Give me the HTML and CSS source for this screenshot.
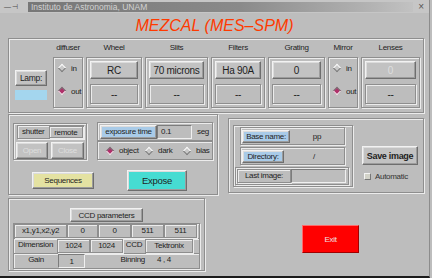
FILE: index.html
```html
<!DOCTYPE html>
<html lang="en">
<head>
  <meta charset="UTF-8" />
  <title>MEZCAL (MES-SPM)</title>
  <link rel="stylesheet" href="styles.css">
</head>
<body>
  <div class="window">
    <div class="titlebar">
      <span class="tb-icons">— ⊣</span>
      <div class="tb-bar">Instituto de Astronomia, UNAM</div>
      <span class="tb-close">×</span>
    </div>
    <h1 class="heading">MEZCAL (MES–SPM)</h1>

    <!-- optical elements -->
    <div class="panel top groove">
      <div class="col lamp-col">
        <span class="lbl"></span>
        <div class="lamp">
          <div class="btn lamp-btn">Lamp:</div>
          <div class="lamp-state"></div>
        </div>
      </div>
      <div class="col w30">
        <span class="lbl">diffuser</span>
        <div class="groove radios">
          <div class="radio"><span class="dia"></span>in</div>
          <div class="radio"><span class="dia on"></span>out</div>
        </div>
      </div>
      <div class="col w56">
        <span class="lbl">Wheel</span>
        <div class="groove sel">
          <div class="btn">RC</div>
          <div class="groove cur">--</div>
        </div>
      </div>
      <div class="col w63">
        <span class="lbl">Slits</span>
        <div class="groove sel">
          <div class="btn">70 microns</div>
          <div class="groove cur">--</div>
        </div>
      </div>
      <div class="col w54">
        <span class="lbl">Filters</span>
        <div class="groove sel">
          <div class="btn">Ha 90A</div>
          <div class="groove cur">--</div>
        </div>
      </div>
      <div class="col w57">
        <span class="lbl">Grating</span>
        <div class="groove sel">
          <div class="btn">0</div>
          <div class="groove cur">--</div>
        </div>
      </div>
      <div class="col w30">
        <span class="lbl">Mirror</span>
        <div class="groove radios">
          <div class="radio"><span class="dia"></span>in</div>
          <div class="radio"><span class="dia on"></span>out</div>
        </div>
      </div>
      <div class="col w59">
        <span class="lbl">Lenses</span>
        <div class="groove sel">
          <div class="btn disabled">0</div>
          <div class="groove cur">--</div>
        </div>
      </div>
    </div>

    <div class="row2">
      <!-- exposure -->
      <div class="panel expo groove">
        <div class="groove shutter">
          <div class="srow groove">
            <span class="s-lbl">shutter</span>
            <span class="s-val groove">remote</span>
          </div>
          <div class="sbtns">
            <div class="btn disabled open">Open</div>
            <div class="btn disabled close">Close</div>
          </div>
        </div>
        <div class="exptime">
          <div class="groove etrow">
            <div class="btn blue et-lbl">exposure time</div>
            <div class="entry et-val">0.1</div>
            <span class="seg">seg</span>
          </div>
          <div class="groove typerow">
            <div class="radio"><span class="dia on"></span>object</div>
            <div class="radio"><span class="dia"></span>dark</div>
            <div class="radio"><span class="dia"></span>bias</div>
          </div>
        </div>
        <div class="btn seq">Sequences</div>
        <div class="btn expose">Expose</div>
      </div>

      <!-- saving -->
      <div class="panel save groove">
        <div class="groove files">
          <div class="frow groove">
            <div class="btn blue f-lbl">Base name:</div>
            <span class="f-val">pp</span>
          </div>
          <div class="frow groove">
            <div class="btn blue f-lbl dir">Directory:</div>
            <span class="f-val">/</span>
          </div>
          <div class="frow groove last">
            <span class="groove l-lbl">Last image:</span>
            <span class="entry l-val"></span>
          </div>
        </div>
        <div class="save-col">
          <div class="btn save-btn">Save image</div>
          <label class="auto"><span class="check"></span>Automatic</label>
        </div>
      </div>
    </div>

    <div class="row3">
      <!-- CCD -->
      <div class="panel ccd groove">
        <div class="btn ccd-btn">CCD parameters</div>
        <div class="ctable">
          <div class="crow groove">
            <span class="cell groove c53">x1,y1,x2,y2</span>
            <span class="cell groove c31">0</span>
            <span class="cell groove c33">0</span>
            <span class="cell groove c33">511</span>
            <span class="cell groove c33">511</span>
          </div>
          <div class="crow groove">
            <span class="cell c43">Dimension</span>
            <span class="cell groove c33">1024</span>
            <span class="cell groove c33">1024</span>
            <span class="cell c22">CCD</span>
            <span class="cell groove c48">Tektronix</span>
          </div>
          <div class="crow groove">
            <span class="cell c44">Gain</span>
            <span class="cell entry c27">1</span>
            <span class="cell c64 right">Binning</span>
            <span class="cell c30">4 , 4</span>
          </div>
        </div>
      </div>
      <div class="btn exit">Exit</div>
    </div>
  </div>
</body>
</html>
```

FILE: styles.css
```css
* {
  box-sizing: border-box;
  margin: 0;
  padding: 0;
  font-family: 'Liberation Sans', Arial, sans-serif;
}

body {
  width: 432px;
  height: 278px;
  overflow: hidden;
  background: #bdbdbd;
  color: #1e1e1e;
  font-size: 8px;
  letter-spacing: -0.3px;
}

.window {
  width: 430px;
  height: 278px;
  border-right: 1px solid #8c8c8c;
  border-bottom: 2px solid #1c1c1c;
}

/* title bar */
.titlebar {
  display: flex;
  align-items: center;
  height: 13px;
  background: #c6c6c6;
}

.tb-icons {
  width: 28px;
  padding-left: 4px;
  font-size: 7px;
  color: #4a4a4a;
}

.tb-bar {
  flex: 1;
  height: 10px;
  padding-left: 3px;
  line-height: 10px;
  font-size: 8.5px;
  letter-spacing: 0;
  color: #d2d2d2;
  background: linear-gradient(90deg, #777 0%, #8a8a8a 55%, #b4b4b4 90%, #c2c2c2 100%);
}

.tb-close {
  width: 16px;
  text-align: center;
  font-size: 10px;
  color: #555;
}

.heading {
  height: 25px;
  line-height: 25px;
  text-align: center;
  font-size: 16px;
  font-weight: normal;
  font-style: italic;
  letter-spacing: 0;
  color: #ff3a00;
}

/* shared bits */
.groove {
  border: 1px solid #8e8e8e;
  box-shadow: inset 1px 1px 0 #ececec, 1px 1px 0 #ececec;
}

.btn {
  display: flex;
  align-items: center;
  justify-content: center;
  background: #c2c2c2;
  border: 1px solid;
  border-color: #f2f2f2 #6e6e6e #6e6e6e #f2f2f2;
  box-shadow: inset -1px -1px 0 #9c9c9c, inset 1px 1px 0 #dcdcdc;
  white-space: nowrap;
}

.btn.disabled { color: #dedede; }
.btn.blue { background: #a9cbe8; }

.entry {
  display: flex;
  align-items: center;
  background: #bdbdbd;
  border: 1px solid;
  border-color: #7c7c7c #f0f0f0 #f0f0f0 #7c7c7c;
}

.radio {
  display: flex;
  align-items: center;
  height: 10px;
}

.dia {
  width: 6px;
  height: 6px;
  margin: 0 6px 0 2px;
  transform: rotate(45deg);
  background: #c8c8c8;
  border: 1px solid;
  border-color: #fafafa #7a7a7a #7a7a7a #fafafa;
}

.dia.on {
  background: #b0306a;
  border-color: #7a7a7a #f0f0f0 #f0f0f0 #7a7a7a;
}

/* top panel */
.panel.top {
  display: flex;
  gap: 3px;
  width: 416px;
  height: 75px;
  margin: 0 0 0 8px;
  padding: 3px 0 0 6px;
}

.col {
  display: flex;
  flex-direction: column;
  gap: 3px;
}

.lbl {
  height: 12px;
  line-height: 12px;
  text-align: center;
}

.lamp-col { width: 35px; }
.w30 { width: 30px; }
.w54 { width: 54px; }
.w56 { width: 56px; }
.w57 { width: 57px; }
.w59 { width: 59px; }
.w63 { width: 63px; }

.lamp { padding-top: 13px; }

.lamp-btn {
  width: 32px;
  height: 16px;
  font-size: 8.5px;
}

.lamp-state {
  width: 32px;
  height: 10px;
  margin-top: 4px;
  background: #a4d6ee;
}

.radios {
  display: flex;
  flex-direction: column;
  gap: 13px;
  height: 51px;
  padding: 5px 0 0 3px;
}

.sel {
  display: flex;
  flex-direction: column;
  gap: 5px;
  height: 51px;
  padding: 3px;
}

.sel .btn {
  height: 18px;
  font-size: 10px;
}

.cur {
  display: flex;
  align-items: center;
  justify-content: center;
  height: 20px;
  font-size: 10px;
}

/* exposure row */
.row2 {
  display: flex;
  align-items: flex-start;
  margin: 1px 0 0 8px;
}

.panel.expo {
  display: grid;
  grid-template-columns: 74px 116px;
  column-gap: 10px;
  align-items: start;
  width: 210px;
  height: 81px;
  padding: 8px 0 0 4px;
}

.shutter {
  height: 37px;
  padding: 1px 2px;
}

.srow {
  display: flex;
  height: 14px;
  margin-left: 1px;
}

.s-lbl {
  width: 31px;
  line-height: 12px;
  text-align: center;
}

.s-val {
  width: 35px;
  line-height: 11px;
  text-align: center;
}

.sbtns {
  display: flex;
  gap: 3px;
  margin-top: 3px;
}

.sbtns .btn { height: 17px; }
.open { width: 33px; }
.close { width: 34px; }

.exptime { margin-top: -1px; }

.etrow {
  display: flex;
  align-items: center;
  height: 19px;
  padding-left: 2px;
}

.et-lbl {
  width: 57px;
  height: 14px;
}

.et-val {
  width: 35px;
  height: 14px;
  padding-left: 3px;
}

.seg { margin-left: 5px; }

.typerow {
  display: flex;
  align-items: center;
  height: 19px;
  padding-left: 7px;
}

.typerow .radio:nth-child(1) { width: 39px; }
.typerow .radio:nth-child(2) { width: 38px; }

.seq {
  width: 62px;
  height: 17px;
  margin: 9px 0 0 19px;
  background: #e4e2a2;
}

.expose {
  width: 60px;
  height: 21px;
  margin: 7px 0 0 30px;
  font-size: 9.5px;
  background: #46dcd2;
}

/* save panel */
.panel.save {
  display: flex;
  align-items: flex-start;
  width: 196px;
  height: 75px;
  margin: 4px 0 0 10px;
  padding: 6px 0 0 4px;
}

.files {
  width: 120px;
  height: 62px;
  padding: 1px 0 0 6px;
}

.frow {
  display: flex;
  align-items: center;
  width: 105px;
  height: 18px;
  margin-bottom: 2px;
  padding-left: 1px;
}

.f-lbl {
  width: 48px;
  height: 13px;
}

.f-lbl.dir { width: 42px; }

.f-val {
  flex: 1;
  text-align: center;
}

.frow.last {
  width: 114px;
  margin: 1px 0 0 -5px;
}

.l-lbl {
  width: 54px;
  height: 14px;
  line-height: 12px;
  text-align: center;
}

.l-val {
  width: 55px;
  height: 14px;
}

.save-col {
  display: flex;
  flex-direction: column;
  margin: 21px 0 0 9px;
}

.save-btn {
  width: 56px;
  height: 19px;
  font-size: 9px;
  font-weight: bold;
}

.auto {
  display: flex;
  align-items: center;
  margin-top: 7px;
  padding-left: 2px;
  color: #333;
}

.check {
  width: 7px;
  height: 7px;
  margin-right: 4px;
  background: #d2d2c8;
  border: 1px solid;
  border-color: #f4f4f4 #777 #777 #f4f4f4;
}

/* CCD row */
.row3 {
  display: flex;
  align-items: flex-start;
  margin-left: 8px;
}

.panel.ccd {
  width: 197px;
  height: 73px;
  margin-top: 3px;
  padding: 9px 0 0 4px;
}

.ccd-btn {
  width: 73px;
  height: 14px;
  margin-left: 57px;
}

.ctable {
  margin-top: 1px;
}

.crow {
  display: flex;
  align-items: center;
  width: 187px;
  height: 16px;
  margin-bottom: -1px;
}

.cell {
  height: 14px;
  line-height: 12px;
  text-align: center;
}

.cell.entry {
  justify-content: center;
  line-height: normal;
}

.cell.right {
  text-align: right;
  padding-right: 4px;
}

.c22 { width: 22px; }
.c27 { width: 27px; }
.c30 { width: 30px; }
.c31 { width: 31px; }
.c33 { width: 33px; }
.c43 { width: 43px; }
.c44 { width: 44px; }
.c48 { width: 48px; }
.c53 { width: 53px; }
.c64 { width: 64px; }

.exit {
  width: 57px;
  height: 28px;
  margin: 30px 0 0 97px;
  background: #ff0000;
  border-color: #ff6a6a #a00000 #a00000 #ff6a6a;
  box-shadow: none;
  color: #f0e0e0;
}
```
